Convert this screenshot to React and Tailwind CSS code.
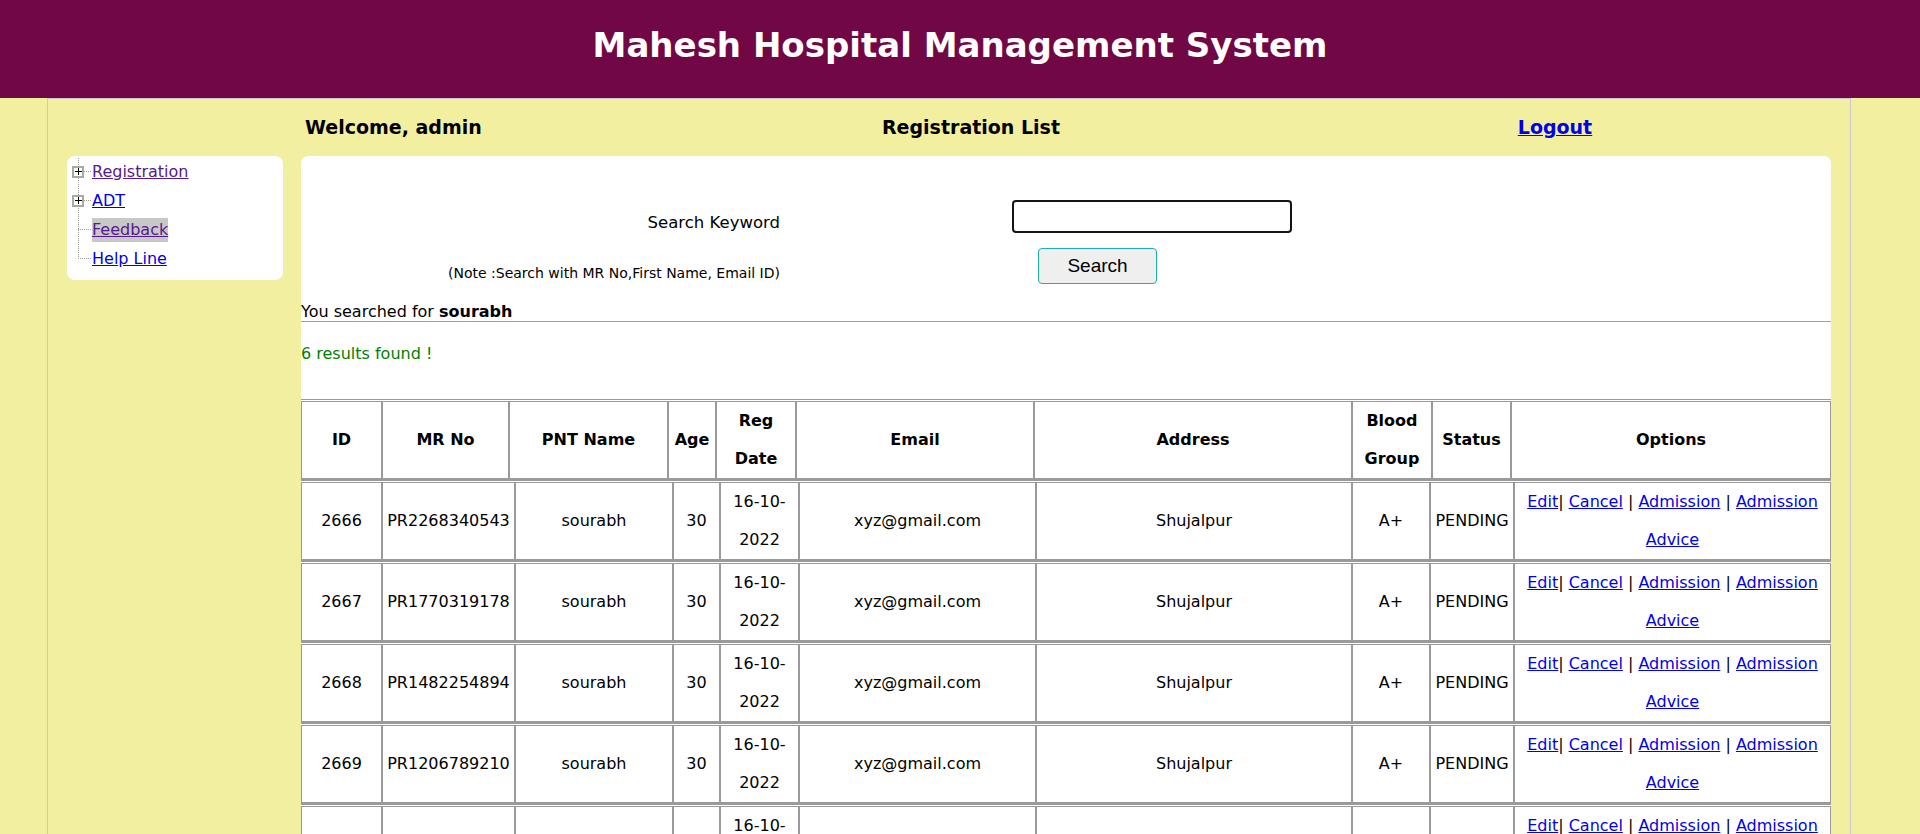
import React from 'react'

const ROWS = [
  { id: 2666, mr: 'PR2268340543' },
  { id: 2667, mr: 'PR1770319178' },
  { id: 2668, mr: 'PR1482254894' },
  { id: 2669, mr: 'PR1206789210' },
  { id: 2670, mr: 'PR1935524867' },
  { id: 2671, mr: 'PR1648201375' },
]

const HEAD_COLS = 'grid grid-cols-[81px_127px_159px_48px_80px_238px_318px_80px_79px_320px]'
const BODY_COLS = 'grid grid-cols-[81px_133px_158px_47px_79px_237px_316px_78px_84px_317px]'
const CELL = 'border border-[#9a9a9a] flex items-center justify-center text-center leading-[38px]'

function PlusBox() {
  return (
    <span className="absolute left-[5px] top-1/2 -translate-y-1/2 w-[12px] h-[12px] border-2 border-[#a8a8a8] bg-white flex items-center justify-center">
      <span className="relative w-[7px] h-[7px]">
        <span className="absolute left-0 right-0 top-[3px] h-px bg-black" />
        <span className="absolute top-0 bottom-0 left-[3px] w-px bg-black" />
      </span>
    </span>
  )
}

function TreeItem({ label, plus, visited, selected }) {
  return (
    <div className="flex items-center h-[29px]">
      <div className="relative w-[25px] h-full flex items-center">
        <span className="ml-[11px] w-[13px] border-t border-dotted border-[#9a9a9a]" />
        {plus && <PlusBox />}
      </div>
      <a
        href="#"
        className={`underline ${visited ? 'text-[#551a8b]' : 'text-[#0000ee]'} ${selected ? 'bg-[#c8c8c8]' : ''}`}
      >
        {label}
      </a>
    </div>
  )
}

function Sep() {
  return <span className="text-black"> | </span>
}

export default function App() {
  return (
    <div className="min-h-screen bg-[#f2efa1] text-black font-['DejaVu_Sans',Verdana,sans-serif] text-[16px]">
      {/* Header */}
      <header className="h-[98px] bg-[#720745] flex justify-center pt-[25px]">
        <h1 className="text-white font-bold text-[34px] leading-[40px]">Mahesh Hospital Management System</h1>
      </header>

      <div className="ml-[47px] w-[1804px] border-x border-t border-[#c9c9cf] pb-[40px]">
        {/* Welcome bar */}
        <div className="h-[57px] flex items-center pl-[253px] font-bold text-[19px]">
          <div className="w-[420px] pl-[4px]">Welcome, admin</div>
          <div className="w-[500px] text-center">Registration List</div>
          <div className="ml-[134px] w-[400px] text-center">
            <a href="#" className="text-[#0000ee] underline">Logout</a>
          </div>
        </div>

        <div className="flex items-start">
          {/* Sidebar */}
          <div className="ml-[19px] w-[216px] bg-white rounded-[8px] pt-px pb-[7px]">
            <div className="relative">
              <span className="absolute left-[11px] top-px h-[101px] border-l border-dotted border-[#9a9a9a]" />
              <TreeItem label="Registration" plus visited />
              <TreeItem label="ADT" plus />
              <TreeItem label="Feedback" visited selected />
              <TreeItem label="Help Line" />
            </div>
          </div>

          {/* Main */}
          <div className="ml-[18px] w-[1530px] bg-white rounded-t-[7px] pb-[30px]">
            <div className="grid grid-cols-[479px_auto] gap-x-[232px] gap-y-[15px] pt-[44px]">
              <div className="text-right pt-[13px] leading-[19px] text-[16.5px]">Search Keyword</div>
              <div>
                <input type="text" className="w-[280px] h-[33px] border-2 border-[#141414] rounded-[4px] outline-none px-2" />
              </div>
              <div className="text-right text-[14px] leading-[16px] pt-[17px]">
                (Note :Search with MR No,First Name, Email ID)
              </div>
              <div>
                <button className="ml-[26px] w-[119px] h-[36px] bg-[#efefef] border border-[#1ab1ad] rounded-[4px] font-['Liberation_Sans',Arial,sans-serif] text-[19px]">
                  Search
                </button>
              </div>
            </div>

            <div className="mt-[18px] leading-[19px]">
              You searched for <b>sourabh</b>
            </div>
            <div className="border-t border-[#a0a0a0]" />
            <div className="mt-[22px] leading-[19px] text-[#008000]">6 results found !</div>

            {/* Table */}
            <div className="mt-[36px]">
              <div className={`${HEAD_COLS} border-t border-b-2 border-[#9a9a9a] pt-px font-bold`}>
                <div className={CELL}>ID</div>
                <div className={CELL}>MR No</div>
                <div className={CELL}>PNT Name</div>
                <div className={CELL}>Age</div>
                <div className={CELL}>Reg<br />Date</div>
                <div className={CELL}>Email</div>
                <div className={CELL}>Address</div>
                <div className={CELL}>Blood<br />Group</div>
                <div className={CELL}>Status</div>
                <div className={CELL}>Options</div>
              </div>
              {ROWS.map(r => (
                <div key={r.id} className={`${BODY_COLS} border-b-2 border-[#9a9a9a] pt-px`}>
                  <div className={CELL}>{r.id}</div>
                  <div className={CELL}>{r.mr}</div>
                  <div className={CELL}>sourabh</div>
                  <div className={CELL}>30</div>
                  <div className={CELL}>16-10-<br />2022</div>
                  <div className={CELL}>xyz@gmail.com</div>
                  <div className={CELL}>Shujalpur</div>
                  <div className={CELL}>A+</div>
                  <div className={CELL}>PENDING</div>
                  <div className={`${CELL} flex-col`}>
                    <div className="whitespace-nowrap">
                      <a href="#" className="text-[#0000ee] underline">Edit</a>|{' '}
                      <a href="#" className="text-[#0000ee] underline">Cancel</a>
                      <Sep />
                      <a href="#" className="text-[#0000ee] underline">Admission</a>
                      <Sep />
                      <a href="#" className="text-[#0000ee] underline">Admission</a>
                    </div>
                    <a href="#" className="text-[#0000ee] underline">Advice</a>
                  </div>
                </div>
              ))}
            </div>
          </div>
        </div>
      </div>
    </div>
  )
}
